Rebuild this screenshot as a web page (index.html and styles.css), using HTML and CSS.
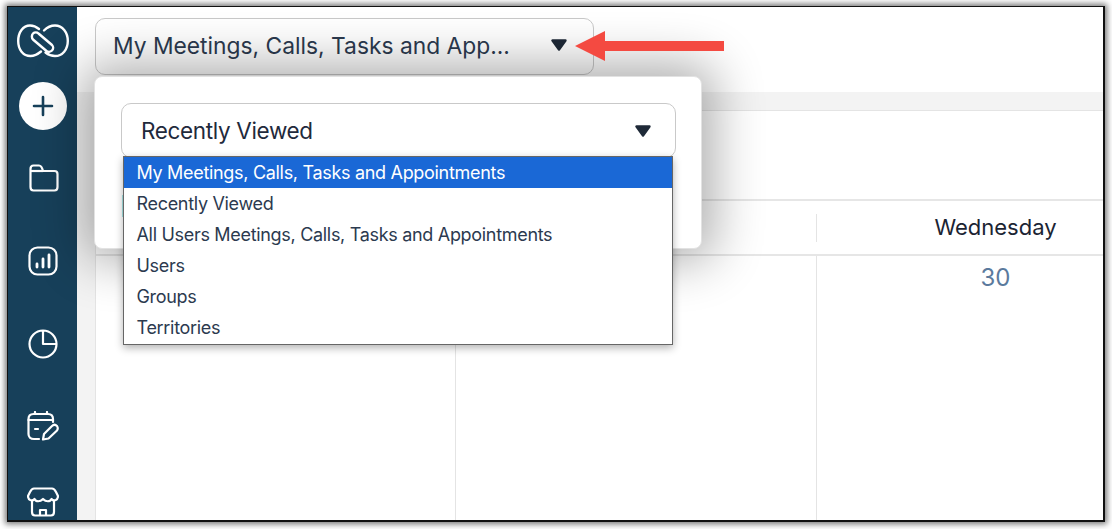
FILE: index.html
```html
<!DOCTYPE html>
<html>
<head>
    <title>Calendar</title>
    <link rel="stylesheet" href="styles.css">
</head>
<body>
    <div class="frame">
        <div class="sidebar">
            <svg class="logo" width="52" height="34" viewBox="0 0 52 34" fill="none" stroke="#fff" stroke-width="2.4" stroke-linecap="round">
                <path d="M22 5 C19 2.500 16 1.500 13 1.500 C6 1.500 1.200 8.500 1.200 17 C1.200 25.500 6 32 13.500 32 C18 32 21 30 24 27.500" />
                <path d="M27 6.500 C30 3.500 34 1.500 38 1.500 C45.500 1.500 50.800 8.500 50.800 17 C50.800 25.500 45.500 32 38 32 C34 32 31 30.500 28.500 28.500" />
                <path d="M16 9.500 C17.500 8 20 8 21.500 9.500 L35 21 C36.500 22.500 36.500 25 35 26.500 C33.500 28 31 28.200 29.500 27 L16 15.500 C14.500 14 14.500 11 16 9.500 Z" />
            </svg>
            <div class="addBtn">
                <svg width="22" height="22" viewBox="0 0 22 22" fill="none" stroke="#17405a" stroke-width="2.6" stroke-linecap="round">
                    <path d="M11 2 V20 M2 11 H20" />
                </svg>
            </div>
            <svg class="navIcon folderIcon" width="30" height="28" viewBox="0 0 30 28" fill="none" stroke="#fff" stroke-width="2.2" stroke-linejoin="round">
                <path d="M1.500 5 C1.500 3 2.500 1.500 4.500 1.500 H10 C12 1.500 13 3 14 7 H25.500 C27.500 7 28.500 8 28.500 10 V23 C28.500 25 27.500 26.500 25.500 26.500 H4.500 C2.500 26.500 1.500 25 1.500 23 Z" />
                <path d="M1.500 7 H14" />
            </svg>
            <svg class="navIcon chartIcon" width="30" height="30" viewBox="0 0 30 30" fill="none" stroke="#fff" stroke-width="2.2" stroke-linecap="round">
                <rect x="1.500" y="1.500" width="27" height="27" rx="8" />
                <path d="M9 21 V18 M15 21 V13 M21 21 V9" stroke-width="2.800" />
            </svg>
            <svg class="navIcon pieIcon" width="30" height="30" viewBox="0 0 30 30" fill="none" stroke="#fff" stroke-width="2.2" stroke-linejoin="round">
                <path d="M15 1.500 A13.500 13.500 0 1 0 28.500 15 A13.500 13.500 0 0 0 15 1.500 V15 H28.500" />
            </svg>
            <svg class="navIcon calIcon" width="32" height="30" viewBox="0 0 32 30" fill="none" stroke="#fff" stroke-width="2.2" stroke-linecap="round" stroke-linejoin="round">
                <path d="M12 28 H7 C3.500 28 1.500 26 1.500 23 V8 C1.500 5 3.500 3 6.500 3 H21 C24 3 26 5 26 8 V11" />
                <path d="M8 1 V3 M20 1 V3 M1.500 9 H26" />
                <path d="M8 18 H11" />
                <path d="M16 28.500 L17 23 L25 15 C26.500 13.500 28.500 13.500 30 15 C31 16.500 31 18 30 19.500 L21.500 27.500 Z" />
            </svg>
            <svg class="navIcon storeIcon" width="32" height="30" viewBox="0 0 32 30" fill="none" stroke="#fff" stroke-width="2.2" stroke-linejoin="round">
                <path d="M7 1.500 H25 C27 1.500 28 3 29 5 L31 9 C31 13 27 15 24.500 12 C23 15 19 15 16 12 C13 15 9 15 7.500 12 C5 15 1 13 1 9 L3 5 C4 3 5 1.500 7 1.500 Z" />
                <path d="M5 14 V25 C5 27.500 6 28.500 8 28.500 H24 C26 28.500 27 27.500 27 25 V14" />
                <path d="M13 28.500 V23 H19 V28.500" />
            </svg>
        </div>

        <div class="main">
            <div class="topBar">
                <div class="viewBtn">
                    <span class="viewLabel">My Meetings, Calls, Tasks and App...</span>
                    <svg class="caret" width="16" height="12" viewBox="0 0 16 12">
                        <path d="M1.500 1.500 H14.500 L8 10.500 Z" fill="#1f2a38" stroke="#1f2a38" stroke-width="2.400" stroke-linejoin="round" />
                    </svg>
                </div>
            </div>
            <div class="content">
                <div class="calendar">
                    <div class="toolbar"></div>
                    <div class="weekHead">
                        <div class="headCell"></div>
                        <div class="headCell colTwo"></div>
                        <div class="headCell headWed">Wednesday</div>
                    </div>
                    <div class="weekBody">
                        <div class="dayCol"></div>
                        <div class="dayCol colTwo"></div>
                        <div class="dayCol dayWed">30</div>
                    </div>
                </div>
            </div>
        </div>

        <div class="popover">
            <div class="selectBox">
                <span class="selectLabel">Recently Viewed</span>
                <svg class="caret" width="16" height="12" viewBox="0 0 16 12">
                    <path d="M1.500 1.500 H14.500 L8 10.500 Z" fill="#1f2a38" stroke="#1f2a38" stroke-width="2.400" stroke-linejoin="round" />
                </svg>
            </div>
            <div class="tealEdge"></div>
            <ul class="listBox">
                <li class="active">My Meetings, Calls, Tasks and Appointments</li>
                <li>Recently Viewed</li>
                <li>All Users Meetings, Calls, Tasks and Appointments</li>
                <li>Users</li>
                <li>Groups</li>
                <li>Territories</li>
            </ul>
        </div>

        <svg class="redArrow" width="149" height="30" viewBox="0 0 149 30">
            <path d="M0 15 L30 0 V10 H149 V20 H30 V30 Z" fill="#f44a41" />
        </svg>
    </div>
</body>
</html>
```

FILE: styles.css
```css
*{
    padding: 0;
    margin: 0;
    box-sizing: border-box;
    font-family: "Inter", "Liberation Sans", sans-serif;
}

html, body{
    height: 100%;
    overflow: hidden;
    background-color: #fff;
}

body{
    padding: 6px 7px 7px 7px;
}

.frame{
    position: relative;
    display: flex;
    width: 100%;
    height: 100%;
    background-color: #fff;
    border-style: solid;
    border-color: #111;
    border-width: 1px 2px 2px 1px;
    box-shadow: 0 0 6px 2px rgba(0,0,0,.55);
    overflow: hidden;
}

.sidebar{
    display: flex;
    flex-direction: column;
    align-items: center;
    width: 69px;
    flex-shrink: 0;
    background-color: #17405a;
    padding-top: 17px;
}

.logo{
    flex-shrink: 0;
}

.addBtn{
    display: flex;
    align-items: center;
    justify-content: center;
    width: 48px;
    height: 48px;
    margin-top: 24px;
    border-radius: 50%;
    background-color: #fff;
    flex-shrink: 0;
}

.navIcon{
    flex-shrink: 0;
}

.folderIcon{
    margin-top: 34px;
    margin-left: 2px;
}

.chartIcon{
    margin-top: 54px;
}

.pieIcon{
    margin-top: 53px;
}

.calIcon{
    margin-top: 52px;
}

.storeIcon{
    margin-top: 46px;
}

.main{
    flex: 1;
    display: flex;
    flex-direction: column;
    min-width: 0;
}

.topBar{
    height: 85px;
    padding: 11px 0 0 18px;
    flex-shrink: 0;
}

.viewBtn{
    display: flex;
    align-items: center;
    justify-content: space-between;
    width: 499px;
    height: 57px;
    padding: 0 26px 3px 17px;
    border: 1px solid #c9c9c9;
    border-radius: 10px;
    font-size: 22.800px;
    color: #2c3a4f;
}

.caret{
    flex-shrink: 0;
}

.content{
    flex: 1;
    display: flex;
    min-height: 0;
    padding: 18px 0 0 18px;
    background-color: #f3f3f3;
}

.calendar{
    flex: 1;
    display: flex;
    flex-direction: column;
    background-color: #fff;
    border-left: 1px solid #e4e4e4;
    border-top: 1px solid #e4e4e4;
}

.toolbar{
    height: 90px;
    border-bottom: 2px solid #e6e6e6;
    flex-shrink: 0;
}

.weekHead{
    display: flex;
    height: 55px;
    flex-shrink: 0;
    align-items: center;
    border-bottom: 2px solid #e6e6e6;
}

.headCell, .dayCol{
    width: 360px;
    flex-shrink: 0;
}

.colTwo{
    width: 361px;
}

.headCell{
    height: 28px;
    border-right: 1px solid #e4e4e4;
}

.headWed{
    flex: 1;
    display: flex;
    align-items: center;
    justify-content: center;
    padding: 0 3px 2px 0;
    border-right: 0;
    font-size: 22px;
    color: #1b2433;
}

.weekBody{
    flex: 1;
    display: flex;
}

.dayCol{
    border-right: 1px solid #e4e4e4;
}

.dayWed{
    flex: 1;
    border-right: 0;
    padding: 7px 3px 0 0;
    text-align: center;
    font-size: 24px;
    color: #5b7a9d;
}

/* view picker opened over the page */
.popover{
    position: absolute;
    left: 86px;
    top: 69px;
    width: 608px;
    height: 173px;
    padding: 26px 25px 0 26px;
    background-color: #fff;
    border: 1px solid #e2e2e2;
    border-radius: 8px;
    box-shadow: 0 0 50px 12px rgba(0,0,0,.32);
}

.selectBox{
    display: flex;
    align-items: center;
    justify-content: space-between;
    height: 55px;
    padding: 0 24px 0 19px;
    border: 1px solid #c9c9c9;
    border-radius: 10px;
    font-size: 22.500px;
    color: #1f2a3c;
}

.selectLabel{
    letter-spacing: -.35px;
}

.tealEdge{
    position: absolute;
    left: 27px;
    top: 118px;
    width: 2px;
    height: 22px;
    background-color: #a8e6e6;
}

.listBox{
    position: absolute;
    left: 28px;
    top: 79px;
    width: 550px;
    padding-bottom: 1px;
    list-style: none;
    background-color: #fff;
    border: 1px solid #666;
    box-shadow: 0 3px 8px rgba(0,0,0,.3);
}

.listBox li{
    height: 31px;
    line-height: 31px;
    padding-left: 12.500px;
    font-size: 18px;
    letter-spacing: -.31px;
    color: #2c3a4f;
}

.listBox li.active{
    background-color: #1a68d6;
    color: #fff;
}

.redArrow{
    position: absolute;
    left: 567px;
    top: 24px;
}
```
